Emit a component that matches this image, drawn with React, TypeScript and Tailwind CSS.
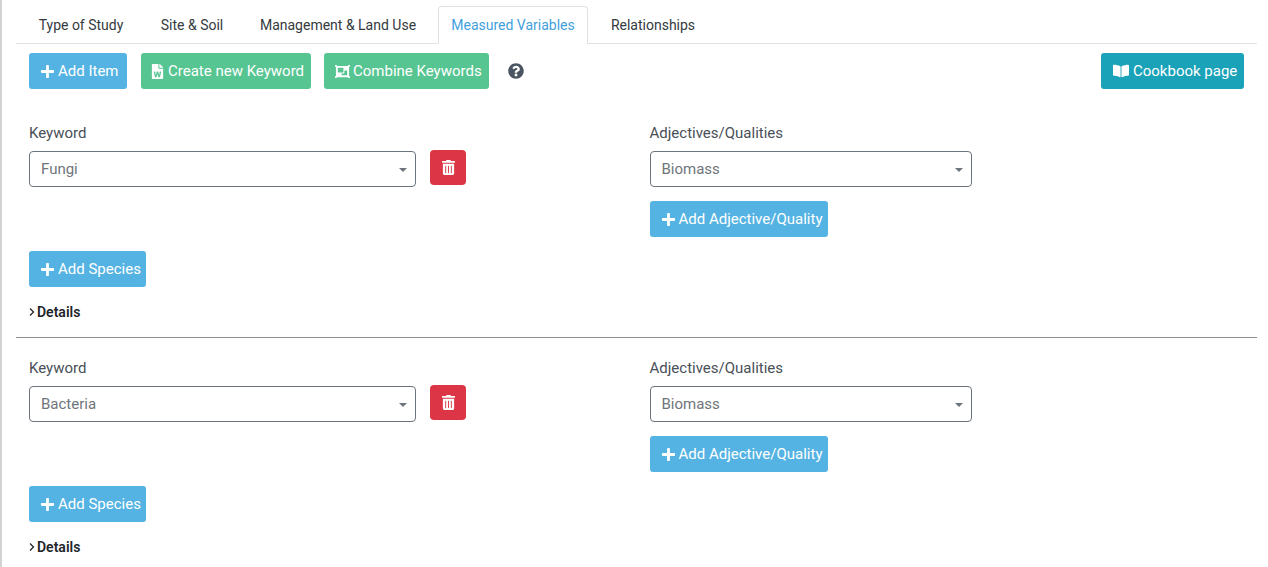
import { useState } from "react"
import type { ReactNode } from "react"
import { FaBookOpen, FaFileWord, FaObjectGroup, FaPlus, FaQuestionCircle, FaTrashAlt } from "react-icons/fa"

const tabs = [
  { name: "Type of Study", width: "w-[114px]" },
  { name: "Site & Soil", width: "w-[92px]" },
  { name: "Management & Land Use", width: "w-[184px]" },
  { name: "Measured Variables", width: "w-[150px]" },
  { name: "Relationships", width: "w-[114px]" },
]

const variables = [
  { id: "fungi", keyword: "Fungi", quality: "Biomass" },
  { id: "bacteria", keyword: "Bacteria", quality: "Biomass" },
]

function ActionButton({ className, icon, children }: { className: string; icon: ReactNode; children: ReactNode }) {
  return (
    <button
      type="button"
      className={`flex h-9 items-center gap-[3px] whitespace-nowrap rounded-[3px] text-white ${className}`}
    >
      {icon}
      <span>{children}</span>
    </button>
  )
}

function SelectBox({ id, value, className }: { id: string; value: string; className: string }) {
  return (
    <div className={`relative max-w-full ${className}`}>
      <select
        id={id}
        defaultValue={value}
        className="h-9 w-full appearance-none rounded-[4px] border border-[#6c757d] bg-white pl-[11px] pr-8 text-[#6f757b]"
      >
        <option>{value}</option>
      </select>
      <svg viewBox="0 0 8 4" className="pointer-events-none absolute right-[9px] top-[17px] h-1 w-2 fill-[#6c757d]">
        <path d="M0 0h8L4 4z" />
      </svg>
    </div>
  )
}

function VariableItem({ id, keyword, quality }: { id: string; keyword: string; quality: string }) {
  return (
    <section>
      <div className="grid grid-cols-2">
        <div className="px-[13px]">
          <label htmlFor={`${id}-keyword`} className="mb-1.5 block">
            Keyword
          </label>
          <div className="flex gap-3.5">
            <SelectBox id={`${id}-keyword`} value={keyword} className="w-[387px]" />
            <button
              type="button"
              aria-label="Delete item"
              className="-mt-px flex h-[35px] w-9 shrink-0 items-center justify-center rounded-[4px] bg-[#dc3545] text-white"
            >
              <FaTrashAlt size={15} />
            </button>
          </div>
        </div>
        <div className="px-[13px]">
          <label htmlFor={`${id}-quality`} className="mb-1.5 block">
            Adjectives/Qualities
          </label>
          <SelectBox id={`${id}-quality`} value={quality} className="w-[322px]" />
          <ActionButton className="mt-3.5 w-[178px] bg-[#54b3e2] pl-[11px]" icon={<FaPlus size={15} />}>
            Add Adjective/Quality
          </ActionButton>
        </div>
      </div>
      <div className="px-[13px]">
        <ActionButton className="mt-3.5 w-[117px] bg-[#54b3e2] pl-[11px]" icon={<FaPlus size={15} />}>
          Add Species
        </ActionButton>
        <details className="mt-[13px]">
          <summary className="flex cursor-pointer list-none items-center gap-0.5 text-sm leading-6 font-semibold text-[#212529]">
            <svg viewBox="0 0 6 8" className="h-2 w-1.5 fill-none stroke-[#212529]" strokeWidth="1.3">
              <path d="M1 .5L4.5 4 1 7.5" />
            </svg>
            Details
          </summary>
        </details>
      </div>
    </section>
  )
}

export default function App() {
  const [active, setActive] = useState("Measured Variables")

  return (
    <div className="min-h-screen border-l-2 border-[#d2d2d2] bg-white pl-3.5 pr-[11px] pt-1.5 font-['Roboto',sans-serif] text-[15px] leading-6 text-[#495057]">
      <nav className="flex gap-2 border-b border-[#dee2e6] pl-2 text-sm">
        {tabs.map((tab) => (
          <button
            key={tab.name}
            type="button"
            onClick={() => setActive(tab.name)}
            className={`-mb-px h-[38px] shrink-0 whitespace-nowrap rounded-t-[4px] border ${tab.width} ${
              active === tab.name
                ? "border-[#dee2e6] border-b-white bg-white text-[#3f9fdc]"
                : "border-transparent text-[#343a40]"
            }`}
          >
            {tab.name}
          </button>
        ))}
      </nav>

      {/* Toolbar */}
      <div className="mt-[9px] flex items-center px-[13px]">
        <ActionButton className="w-[98px] bg-[#54b3e2] pl-[11px]" icon={<FaPlus size={15} />}>
          Add Item
        </ActionButton>
        <ActionButton className="ml-3.5 w-[170px] bg-[#57c592] pl-[9px]" icon={<FaFileWord size={15} />}>
          Create new Keyword
        </ActionButton>
        <ActionButton className="ml-[13px] w-[165px] bg-[#57c592] pl-[11px]" icon={<FaObjectGroup size={15} />}>
          Combine Keywords
        </ActionButton>
        <button type="button" aria-label="Help" className="ml-[19px] text-[#4b5562]">
          <FaQuestionCircle size={16} />
        </button>
        <a
          href="#cookbook"
          className="ml-auto flex h-9 w-[143px] items-center gap-1 whitespace-nowrap rounded-[3px] bg-[#1aa2b8] pl-3 text-white"
        >
          <FaBookOpen size={16} />
          Cookbook page
        </a>
      </div>

      {/* Measured variables */}
      <div className="mt-8">
        {variables.map((item, index) => (
          <div key={item.id}>
            {index > 0 && <hr className="mt-[13px] mb-[18px] border-[#8f8f8f]" />}
            <VariableItem {...item} />
          </div>
        ))}
      </div>
    </div>
  )
}
